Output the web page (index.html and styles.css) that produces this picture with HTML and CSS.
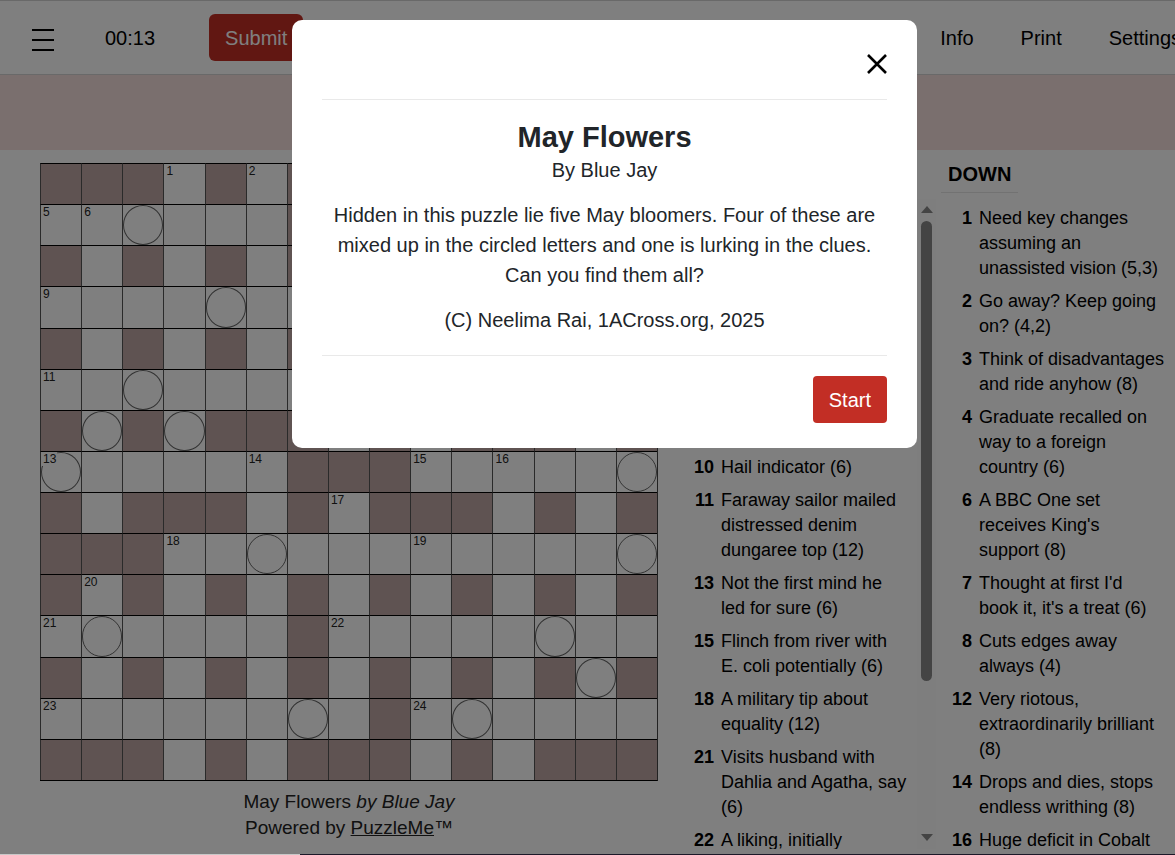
FILE: index.html
```html
<!DOCTYPE html>
<html lang="en">
<head>
    <meta charset="UTF-8">
    <meta name="viewport" content="width=device-width, initial-scale=1.0">
    <title>May Flowers</title>
    <link rel="stylesheet" href="styles.css">
</head>
<body>
<div class="page">
    <header class="toolbar">
        <button class="menu" aria-label="Menu">
            <svg width="22" height="22" viewBox="0 0 22 22"><path d="M0 1h22M0 11h22M0 21h22" stroke="#000" stroke-width="2"/></svg>
        </button>
        <span class="timer">00:13</span>
        <button class="btn">Submit</button>
        <nav class="nav">
            <a href="#">Info</a>
            <a href="#">Print</a>
            <a href="#">Settings</a>
        </nav>
    </header>
    <div class="banner"></div>

    <main class="main">
        <section class="board">
            <div class="grid" id="grid"></div>
            <div class="caption">
                <div>May Flowers <em>by Blue Jay</em></div>
                <div>Powered by <a href="#">PuzzleMe</a>™</div>
            </div>
        </section>

        <section class="clues">
            <div class="clue-col">
                <h3>ACROSS</h3>
                <div class="clue-body">
                    <ul class="clue-list">
                        <li class="tall"><b>5</b></li>
                        <li class="tall"><b>7</b></li>
                        <li class="tall"><b>9</b></li>
                        <li><b>10</b><span>Hail indicator (6)</span></li>
                        <li><b>11</b><span>Faraway sailor mailed distressed denim dungaree top (12)</span></li>
                        <li><b>13</b><span>Not the first mind he led for sure (6)</span></li>
                        <li><b>15</b><span>Flinch from river with E. coli potentially (6)</span></li>
                        <li><b>18</b><span>A military tip about equality (12)</span></li>
                        <li><b>21</b><span>Visits husband with Dahlia and Agatha, say (6)</span></li>
                        <li><b>22</b><span>A liking, initially</span></li>
                    </ul>
                    <div class="scroll">
                        <i class="up"></i>
                        <div class="track"><div class="thumb"></div></div>
                        <i class="down"></i>
                    </div>
                </div>
            </div>
            <div class="clue-col">
                <h3>DOWN</h3>
                <div class="clue-body">
                    <ul class="clue-list">
                        <li><b>1</b><span>Need key changes assuming an unassisted vision (5,3)</span></li>
                        <li><b>2</b><span>Go away? Keep going on? (4,2)</span></li>
                        <li><b>3</b><span>Think of disadvantages and ride anyhow (8)</span></li>
                        <li><b>4</b><span>Graduate recalled on way to a foreign country (6)</span></li>
                        <li><b>6</b><span>A BBC One set receives King's support&nbsp;(8)</span></li>
                        <li><b>7</b><span>Thought at first I'd book it, it's a treat (6)</span></li>
                        <li><b>8</b><span>Cuts edges away always (4)</span></li>
                        <li><b>12</b><span>Very riotous, extraordinarily brilliant (8)</span></li>
                        <li><b>14</b><span>Drops and dies, stops endless writhing (8)</span></li>
                        <li><b>16</b><span>Huge deficit in Cobalt</span></li>
                    </ul>
                    <div class="scroll"></div>
                </div>
            </div>
        </section>
    </main>
    <div class="strip"></div>

    <div class="overlay">
        <div class="modal" role="dialog" aria-labelledby="modal-title">
            <div class="modal-header">
                <button class="close" aria-label="Close">
                    <svg width="20" height="20" viewBox="0 0 20 20"><path d="M1 1l18 18M19 1L1 19" stroke="#000" stroke-width="2.6"/></svg>
                </button>
            </div>
            <div class="modal-body">
                <h2 id="modal-title">May Flowers</h2>
                <div>By Blue Jay</div>
                <p>Hidden in this puzzle lie five May bloomers. Four of these are mixed up in the circled letters and one is lurking in the clues. Can you find them all?</p>
                <p>(C) Neelima Rai, 1ACross.org, 2025</p>
            </div>
            <div class="modal-footer">
                <button class="btn">Start</button>
            </div>
        </div>
    </div>
</div>

<script>
    // # = block, O = circled cell
    const rows = [
        "###.#.###.#.###",
        "..O...#........",
        "#.#.#.#.#.#.#.#",
        "....O...#......",
        "#.#.#.#.#.#.#.#",
        "..O.........###",
        "#O#O###.#.###.#",
        "O.....###.....O",
        "#.###.#.###.#.#",
        "###..O........O",
        "#.#.#.#.#.#.#.#",
        ".O....#.....O..",
        "#.#.#.#.#.#.#O#",
        "......O.#.O....",
        "###.#.###.#.###"
    ];

    function isBlock(r, c) {
        return !rows[r] || !rows[r][c] || rows[r][c] === "#";
    }

    const grid = document.getElementById("grid");
    let num = 0;
    for (let r = 0; r < rows.length; r++) {
        for (let c = 0; c < rows[r].length; c++) {
            const cell = document.createElement("div");
            cell.className = "cell";
            if (isBlock(r, c)) {
                cell.classList.add("block");
            } else {
                if (rows[r][c] === "O") cell.classList.add("circle");
                const across = isBlock(r, c - 1) && !isBlock(r, c + 1);
                const down = isBlock(r - 1, c) && !isBlock(r + 1, c);
                if (across || down) {
                    const label = document.createElement("span");
                    label.textContent = ++num;
                    cell.appendChild(label);
                }
            }
            grid.appendChild(cell);
        }
    }
</script>
</body>
</html>
```
FILE: styles.css
```css
* {
    box-sizing: border-box;
}
body {
    margin: 0;
    overflow: hidden;
    font-family: "Liberation Sans", Arial, sans-serif;
    font-size: 20px;
    color: #000;
    background: #fff;
}
.page {
    position: relative;
    display: flex;
    flex-direction: column;
    min-width: 1209px;
    height: 100vh;
}
.toolbar {
    display: flex;
    flex: none;
    align-items: center;
    height: 75px;
    padding: 0 28px 0 32px;
    border-top: 1px solid #d2d2d2;
    border-bottom: 1px solid #d2d2d2;
}
.menu, .close {
    display: flex;
    padding: 0;
    border: none;
    background: none;
    cursor: pointer;
}
.menu {
    margin-top: 4px;
}
.timer {
    margin: 0 54px 0 51px;
    padding-top: 2px;
}
.btn {
    height: 47px;
    padding: 2px 16px 0;
    font-family: inherit;
    font-size: 20px;
    color: #fff;
    background: #c22e25;
    border: none;
    border-radius: 6px;
    cursor: pointer;
}
.nav {
    display: flex;
    gap: 47px;
    margin-left: auto;
    padding-top: 2px;
}
.nav a {
    color: #000;
    text-decoration: none;
}
.banner {
    flex: none;
    height: 75px;
    background: #f4dedc;
}

.main {
    display: grid;
    grid-template-columns: 618fr 511fr;
    gap: 25px;
    flex: 1;
    min-height: 0;
    padding: 13px 15px 5px 40px;
}
.grid {
    display: grid;
    grid-template-columns: repeat(15, 1fr);
    grid-template-rows: repeat(15, 1fr);
    aspect-ratio: 1;
    border-right: 1px solid #444;
    border-bottom: 1px solid #000;
}
.cell {
    position: relative;
    min-width: 0;
    min-height: 0;
    border-top: 1px solid #000;
    border-left: 1px solid #555;
}
.cell.block {
    background: #bfa7a5;
}
.cell span {
    position: absolute;
    top: 0;
    left: 1px;
    padding: 0 1px;
    font-size: 12px;
    line-height: 14px;
    color: #222;
    background: #fff;
}
.circle::before {
    content: "";
    position: absolute;
    inset: 0;
    border: 1px solid #666;
    border-radius: 50%;
}
.caption {
    margin-top: 8px;
    font-size: 19px;
    line-height: 26px;
    text-align: center;
    color: #222;
}
.caption a {
    color: inherit;
}

.clues {
    display: grid;
    grid-template-columns: 1fr 1fr;
    gap: 5px;
    min-height: 0;
}
.clue-col {
    display: flex;
    flex-direction: column;
    min-height: 0;
}
.clue-col h3 {
    align-self: flex-start;
    margin: 0 0 6px;
    padding: 0 7px 7px;
    font-size: 20px;
    line-height: 22px;
    border-bottom: 1px solid #e4e4e4;
}
.clue-body {
    display: flex;
    flex: 1;
    min-height: 0;
}
.clue-list {
    flex: 1;
    margin: 0;
    padding: 7px 10px 0 0;
    overflow: hidden;
    list-style: none;
    font-size: 18px;
    line-height: 25px;
}
.clue-list li {
    display: flex;
    gap: 7px;
    margin-bottom: 8px;
}
.clue-list b {
    flex: none;
    width: 31px;
    text-align: right;
}
.tall {
    min-height: 75px;
}
.scroll {
    display: flex;
    flex-direction: column;
    align-items: center;
    width: 19px;
    padding: 7px 0 8px;
    background: #fcfcfc;
}
.up, .down {
    border: 6px solid transparent;
    border-top: none;
    border-bottom: 7px solid #888;
}
.down {
    border-top: 7px solid #888;
    border-bottom: none;
}
.track {
    flex: 1;
    width: 11px;
    padding: 8px 0;
}
.thumb {
    height: 76%;
    border-radius: 6px;
    background: #888;
}
.strip {
    flex: none;
    position: relative;
    z-index: 2;
    height: 1px;
    background: linear-gradient(to right, #c8c8c8 300px, #1c1828 300px);
}

.overlay {
    position: absolute;
    inset: 0;
    padding: 20px;
    background: rgba(0, 0, 0, 0.5);
}
.modal {
    width: 625px;
    margin: 0 auto;
    padding: 0 30px 25px;
    color: #212529;
    background: #fff;
    border-radius: 10px;
}
.modal-header {
    display: flex;
    justify-content: flex-end;
    padding: 34px 0 25px;
    border-bottom: 1px solid #e9e9e9;
}
.modal-body {
    padding: 20px 0;
    line-height: 30px;
    text-align: center;
}
.modal-body h2 {
    margin: 0;
    font-size: 29px;
    line-height: 35px;
}
.modal-body p {
    margin: 15px 0 0;
}
.modal-footer {
    display: flex;
    justify-content: flex-end;
    padding-top: 20px;
    border-top: 1px solid #e9e9e9;
}
.modal-footer .btn {
    border-radius: 4px;
}
```
